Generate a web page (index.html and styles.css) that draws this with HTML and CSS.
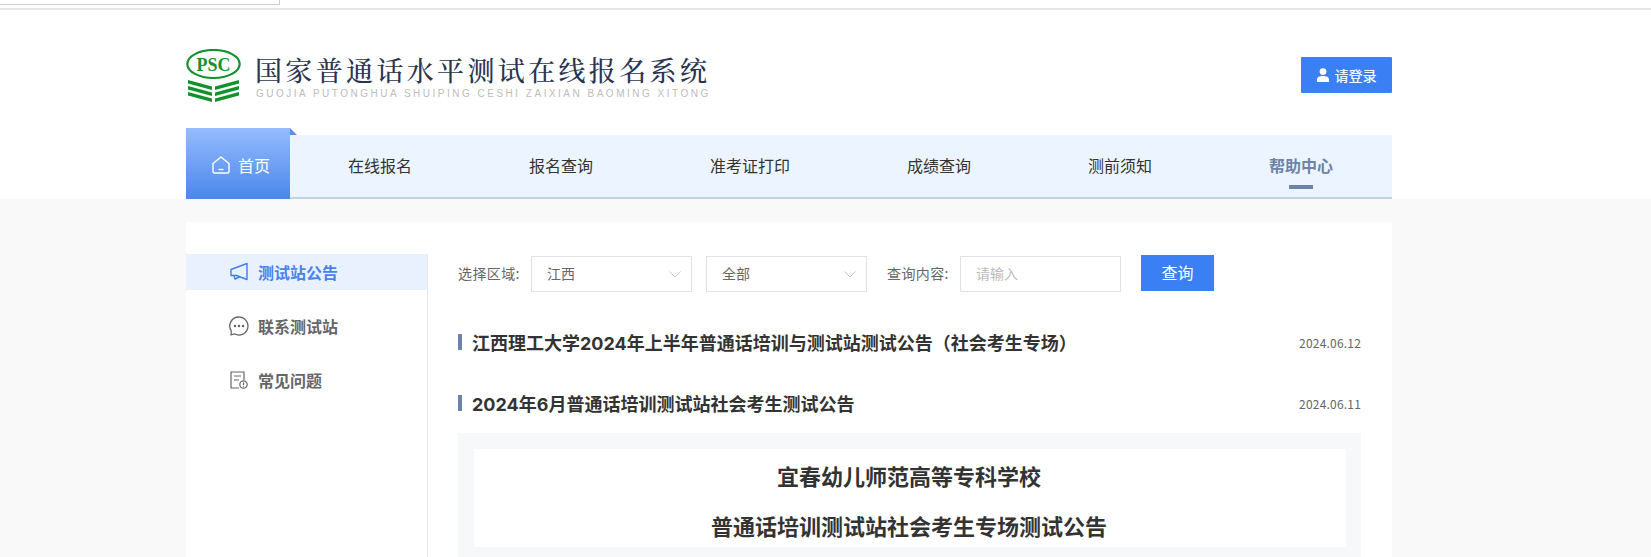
FILE: index.html
```html
<!DOCTYPE html>
<html lang="zh-CN">
<head>
<meta charset="utf-8">
<title>国家普通话水平测试在线报名系统</title>
<link rel="stylesheet" href="styles.css">
</head>
<body>
<div class="topbar"><div class="topbar-stub"></div></div>
<div class="top-section">
  <header class="header">
    <div class="brand">
      <svg class="logo" viewBox="0 0 55 53" width="55" height="53" aria-label="PSC">
        <ellipse cx="27.5" cy="15" rx="26.2" ry="14" fill="#fff" stroke="#12922b" stroke-width="2.2"/>
        <text x="27.5" y="21.5" text-anchor="middle" class="logo-text">PSC</text>
        <g fill="#12922b">
          <path d="M2 31 L26 37.5 V40.9 L2 34.4Z"/>
          <path d="M2 37 L26 43.5 V46.9 L2 40.4Z"/>
          <path d="M2 43 L26 49.5 V53 L2 46.4Z"/>
          <path d="M53 31 L29 37.5 V40.9 L53 34.4Z"/>
          <path d="M53 37 L29 43.5 V46.9 L53 40.4Z"/>
          <path d="M53 43 L29 49.5 V53 L53 46.4Z"/>
        </g>
      </svg>
      <div class="brand-text">
        <div class="brand-title">国家普通话水平测试在线报名系统</div>
        <div class="brand-sub">GUOJIA PUTONGHUA SHUIPING CESHI ZAIXIAN BAOMING XITONG</div>
      </div>
    </div>
    <a class="login">
      <svg viewBox="0 0 12 14" width="12" height="14"><circle cx="6" cy="3.6" r="3.4" fill="#fff"/><path d="M0 14 V11.5 C0 9 2.5 8 6 8 S12 9 12 11.5 V14Z" fill="#fff"/></svg>
      <span>请登录</span>
    </a>
  </header>
  <nav class="nav">
    <a class="nav-home">
      <svg viewBox="0 0 18 18" width="18" height="18" fill="none" stroke="#fff" stroke-width="1.4"><path d="M1 7.5 L9 1 L17 7.5 V15.5 Q17 17 15.5 17 H2.5 Q1 17 1 15.5Z" stroke-linejoin="round"/><path d="M6.5 13.5 H11.5"/></svg>
      <span>首页</span>
    </a>
    <ul class="nav-list">
      <li class="nav-item">在线报名</li>
      <li class="nav-item">报名查询</li>
      <li class="nav-item">准考证打印</li>
      <li class="nav-item">成绩查询</li>
      <li class="nav-item">测前须知</li>
      <li class="nav-item nav-item-active">帮助中心</li>
    </ul>
  </nav>
</div>
<main class="page">
  <div class="card">
    <aside class="side">
      <a class="side-item side-item-active">
        <svg viewBox="-1 -1 20 20" width="20" height="20" fill="none" stroke="#3f7ff0" stroke-width="1.4" stroke-linejoin="round"><path d="M17 .5 V16.5 L6.5 12.5 H1 V6.5Z"/><path d="M4 12.5 L5 16 L9.5 14"/></svg>
        <span>测试站公告</span>
      </a>
      <a class="side-item">
        <svg viewBox="0 0 20 20" width="20" height="20" fill="none" stroke="#666" stroke-width="1.3"><path d="M10 1 A9 9 0 1 1 5.5 17.8 L2 19 L2.3 15 A9 9 0 0 1 10 1Z" stroke-linejoin="round"/><circle cx="6" cy="10" r=".6" fill="#666"/><circle cx="10" cy="10" r=".6" fill="#666"/><circle cx="14" cy="10" r=".6" fill="#666"/></svg>
        <span>联系测试站</span>
      </a>
      <a class="side-item">
        <svg viewBox="-1 -1 20 20" width="20" height="20" fill="none" stroke="#666" stroke-width="1.2"><path d="M9 17 H1 V1 H14 V9"/><path d="M4 5 H11 M4 9 H9"/><circle cx="13.5" cy="13.5" r="3.7"/><path d="M13.5 11.5 V14 M13.5 15 V15.8"/></svg>
        <span>常见问题</span>
      </a>
    </aside>
    <section class="main">
      <div class="filters">
        <span class="filter-label">选择区域:</span>
        <div class="select select-region">
          <span>江西</span>
          <svg viewBox="0 0 12 7" width="12" height="7" fill="none" stroke="#c0c4cc" stroke-width="1"><path d="M.5 .5 L6 6 L11.5 .5"/></svg>
        </div>
        <div class="select select-type">
          <span>全部</span>
          <svg viewBox="0 0 12 7" width="12" height="7" fill="none" stroke="#c0c4cc" stroke-width="1"><path d="M.5 .5 L6 6 L11.5 .5"/></svg>
        </div>
        <span class="filter-label filter-label-query">查询内容:</span>
        <input class="query-input" type="text" placeholder="请输入">
        <button class="query-btn" type="button">查询</button>
      </div>
      <div class="notice">
        <h3 class="notice-title">江西理工大学2024年上半年普通话培训与测试站测试公告（社会考生专场）</h3>
        <span class="notice-date">2024.06.12</span>
      </div>
      <div class="notice">
        <h3 class="notice-title">2024年6月普通话培训测试站社会考生测试公告</h3>
        <span class="notice-date">2024.06.11</span>
      </div>
      <div class="article">
        <div class="article-inner">
          <h2 class="article-head">宜春幼儿师范高等专科学校</h2>
          <h2 class="article-head">普通话培训测试站社会考生专场测试公告</h2>
        </div>
      </div>
    </section>
  </div>
</main>
</body>
</html>
```

FILE: styles.css
```css
* { box-sizing: border-box; }
html, body { margin: 0; padding: 0; height: 557px; overflow: hidden; }
body {
  background: #f9f9f9;
  color: #333;
  font-family: "Noto Sans CJK SC", "Noto Sans", sans-serif;
}
.topbar { height: 10px; background: #fff; border-bottom: 2px solid #e6e6e6; }
.topbar-stub { width: 280px; height: 5px; border-right: 1px solid #ccc; border-bottom: 1px solid #ccc; }
.top-section { background: #fff; height: 189px; }
.header {
  width: 1206px;
  height: 118px;
  margin-left: 186px;
  padding-top: 39px;
  display: flex;
  justify-content: space-between;
  align-items: flex-start;
}
.brand { display: flex; gap: 15px; }
.logo { display: block; }
.logo-text {
  font-family: "Liberation Serif", serif;
  font-weight: 700;
  font-size: 18px;
  fill: #12922b;
}
.brand-text { padding-top: 5px; }
.brand-title {
  font-family: "Noto Serif CJK SC", "Noto Sans CJK SC", sans-serif;
  font-size: 27px;
  font-weight: 500;
  line-height: 32px;
  letter-spacing: 3.35px;
  margin-left: -1px;
  color: #2b3550;
  white-space: nowrap;
}
.brand-sub {
  font-family: "Liberation Sans", sans-serif;
  font-size: 10px;
  line-height: 12px;
  letter-spacing: 2.5px;
  color: #bcbcbc;
  white-space: nowrap;
  margin-top: 2px;
}
.login {
  width: 91px;
  height: 36px;
  margin-top: 8px;
  padding-bottom: 1px;
  background: #3a80f4;
  border-radius: 1px;
  color: #fff;
  font-size: 14px;
  display: flex;
  align-items: center;
  justify-content: center;
  gap: 6px;
  -webkit-text-stroke: .2px #fff;
}
.nav { width: 1206px; margin-left: 186px; display: flex; height: 71px; }
.nav-home {
  width: 104px;
  height: 71px;
  position: relative;
  background: linear-gradient(#95bbfd, #4a87eb);
  color: #fff;
  font-size: 16px;
  display: flex;
  align-items: center;
  justify-content: center;
  gap: 8px;
  padding: 3px 0 0 6px;
}
.nav-home::after {
  content: "";
  position: absolute;
  left: 100%;
  top: 0;
  border-top: 7px solid transparent;
  border-left: 7px solid #5c8fe6;
}
.nav-list {
  flex: 1;
  height: 64px;
  margin: 7px 0 0;
  padding: 0 59px 3px 58px;
  list-style: none;
  background: #ecf5ff;
  border-bottom: 2px solid #c0d2e6;
  display: flex;
  justify-content: space-between;
  align-items: center;
}
.nav-item { position: relative; font-size: 16px; color: #333; line-height: 24px; }
.nav-item-active { font-weight: 700; color: #6e83a9; }
.nav-item-active::after {
  content: "";
  position: absolute;
  left: 50%;
  top: 32px;
  width: 24px;
  height: 4px;
  margin-left: -12px;
  background: #6e83a9;
}
.page { padding-top: 23px; }
.card {
  width: 1206px;
  height: 335px;
  margin-left: 186px;
  background: #fff;
  display: flex;
  align-items: stretch;
}
.side {
  width: 242px;
  margin-top: 32px;
  border-right: 1px solid #e6e6e6;
  display: flex;
  flex-direction: column;
  gap: 18px;
}
.side-item {
  height: 36px;
  padding-left: 43px;
  display: flex;
  align-items: center;
  font-size: 16px;
  font-weight: 700;
  color: #666;
}
.side-item span { margin-left: 9px; }
.side-item-active { background: #e8f1fd; color: #4a82ee; }
.side-item svg { flex: none; }
.main { flex: 1; padding: 33px 31px 0 30px; min-width: 0; }
.filters { display: flex; align-items: center; height: 37px; }
.filter-label {
  flex: none;
  width: 73px;
  padding-bottom: 2px;
  font-size: 14px;
  letter-spacing: .4px;
  color: #666;
  white-space: nowrap;
}
.select {
  height: 36px;
  margin-top: 1px;
  border: 1px solid #dfe2ea;
  padding: 0 10px 2px 15px;
  display: flex;
  align-items: center;
  justify-content: space-between;
  font-size: 14px;
  color: #666;
}
.select svg { margin-top: 2px; }
.select-region { width: 161px; }
.select-type { width: 161px; margin-left: 14px; }
.filter-label-query { margin-left: 20px; }
.query-input {
  width: 161px;
  height: 36px;
  margin: 1px 0 0;
  padding: 0 15px 2px;
  border: 1px solid #dfe2ea;
  outline: none;
  background: #fff;
  font: 14px "Noto Sans CJK SC", sans-serif;
  color: #666;
}
.query-input::placeholder { color: #bbb; opacity: 1; }
.query-btn {
  width: 73px;
  height: 36px;
  margin: 0 0 1px 20px;
  padding: 0 0 2px;
  border: 0;
  background: #3a80f4;
  color: #fff;
  font: 16px "Noto Sans CJK SC", sans-serif;
}
.notice {
  height: 61px;
  display: flex;
  justify-content: space-between;
  align-items: center;
}
.filters + .notice { margin-top: 19px; }
.notice-title {
  display: flex;
  gap: 10px;
  margin: 0;
  padding-top: 4px;
  font-family: Inter, "Noto Sans CJK SC", sans-serif;
  font-size: 18px;
  line-height: 20px;
  font-weight: 700;
  color: #333;
  white-space: nowrap;
}
.notice-title::before {
  content: "";
  flex: none;
  width: 4px;
  height: 16px;
  background: #6e83a9;
}
.notice-date { padding-top: 2px; font-size: 12px; letter-spacing: .2px; color: #666; }
.article { background: #f7f8fa; padding: 16px 15px 0 16px; height: 124px; }
.article-inner { background: #fff; height: 98px; padding: 1px 2px 0 0; text-align: center; }
.article-head {
  margin: 0;
  font-size: 22px;
  line-height: 50px;
  font-weight: 700;
  color: #333;
}
```
